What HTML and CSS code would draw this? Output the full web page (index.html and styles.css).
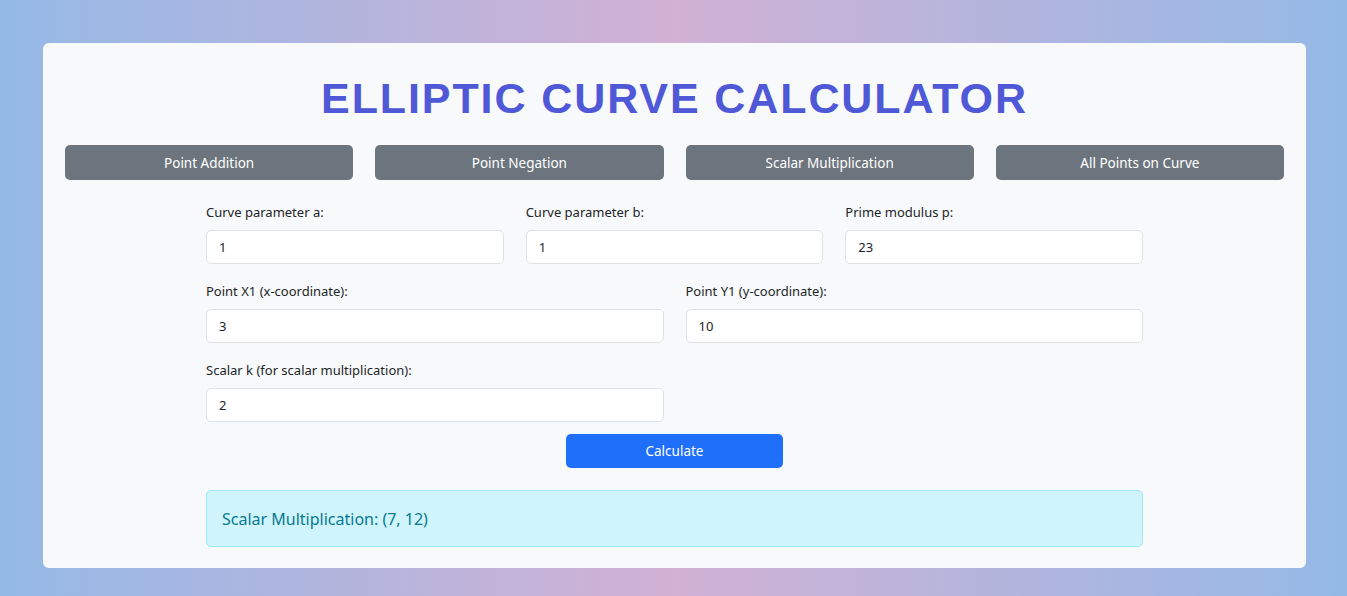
FILE: index.html
```html
<!DOCTYPE html>
<html>
<head>
<meta charset="utf-8">
<link rel="stylesheet" href="styles.css">
</head>
<body>
<div class="card">
  <h1 class="title">ELLIPTIC CURVE CALCULATOR</h1>
  <div class="tabs">
    <button class="tab">Point Addition</button>
    <button class="tab">Point Negation</button>
    <button class="tab">Scalar Multiplication</button>
    <button class="tab">All Points on Curve</button>
  </div>
  <form class="form">
    <div class="row three">
      <div class="field"><label>Curve parameter a:</label><input type="text" value="1"></div>
      <div class="field"><label>Curve parameter b:</label><input type="text" value="1"></div>
      <div class="field"><label>Prime modulus p:</label><input type="text" value="23"></div>
    </div>
    <div class="row two">
      <div class="field"><label>Point X1 (x-coordinate):</label><input type="text" value="3"></div>
      <div class="field"><label>Point Y1 (y-coordinate):</label><input type="text" value="10"></div>
    </div>
    <div class="row two">
      <div class="field"><label>Scalar k (for scalar multiplication):</label><input type="text" value="2"></div>
    </div>
    <div class="actions"><button type="button" class="calc">Calculate</button></div>
    <div class="alert">Scalar Multiplication: (7, 12)</div>
  </form>
</div>
</body>
</html>
```
FILE: styles.css
```css
* { box-sizing: border-box; }
html, body { margin: 0; height: 100%; }
body {
  background: linear-gradient(90deg, #94b9e6 0%, #d1b1d4 50%, #94b9e6 100%);
  font-family: "Noto Sans", "Open Sans", sans-serif;
  color: #212529;
  padding: 43px 41px 28px 43px;
}
.card {
  background: #f8f9fa;
  border-radius: 6px;
  padding: 22px 22px 21px;
  height: 525px;
}
.title {
  margin: 8px 0 22px;
  text-align: center;
  font-family: "Liberation Sans", Arial, sans-serif;
  font-weight: 700;
  font-size: 43px;
  line-height: 50px;
  letter-spacing: 1.9px;
  color: #4f58d6;
}
.tabs {
  display: grid;
  grid-template-columns: repeat(4, 1fr);
  gap: 22px;
}
.tab {
  height: 35px;
  border: none;
  border-radius: 5px;
  background: #6c757d;
  color: #fff;
  font-family: inherit;
  font-size: 13.5px;
}
.form {
  width: 937px;
  margin: 23px auto 0;
}
.row {
  display: grid;
  gap: 22px;
  margin-bottom: 18px;
}
.row.three { grid-template-columns: repeat(3, 1fr); }
.row.two { grid-template-columns: repeat(2, 1fr); }
.field { display: flex; flex-direction: column; }
.field label {
  font-size: 13px;
  line-height: 18px;
  margin-bottom: 9px;
}
.field input {
  height: 34px;
  border: 1px solid #dee2e6;
  border-radius: 5px;
  background: #fff;
  padding: 0 12px;
  font-family: inherit;
  font-size: 13px;
  color: #212529;
}
.actions {
  display: flex;
  justify-content: center;
  margin-top: -6px;
}
.calc {
  width: 217px;
  height: 34px;
  border: none;
  border-radius: 5px;
  background: #1f6ff8;
  color: #fff;
  font-family: inherit;
  font-size: 13.5px;
}
.alert {
  margin-top: 22px;
  height: 57px;
  background: #cff4fc;
  border: 1px solid #9eeaf9;
  border-radius: 5px;
  color: #087990;
  font-size: 16px;
  padding: 0 15px;
  display: flex;
  align-items: center;
}
```
